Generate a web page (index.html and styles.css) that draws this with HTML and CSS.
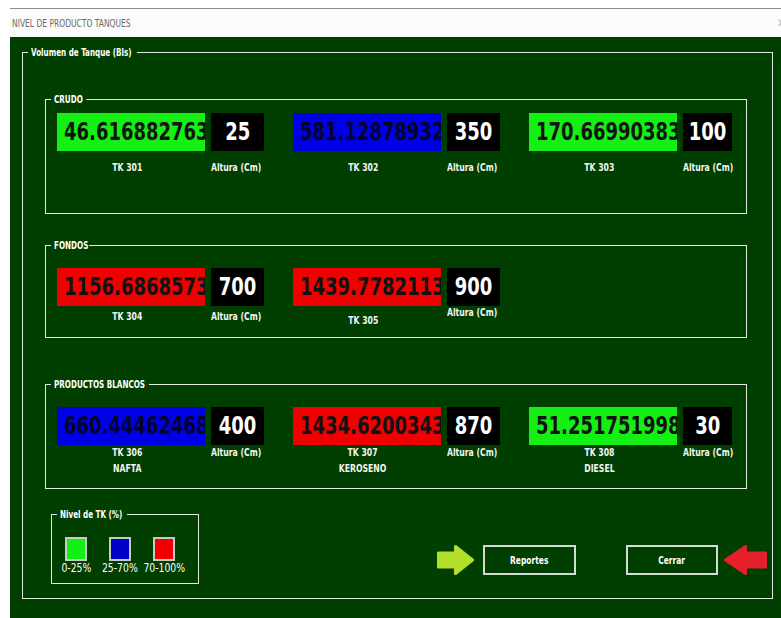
FILE: index.html
```html
<!DOCTYPE html>
<html lang="es">
<head>
<meta charset="utf-8">
<title>NIVEL DE PRODUCTO TANQUES</title>
<link rel="stylesheet" href="styles.css">
</head>
<body>
<div class="window">
  <div class="titlebar">
    <span class="title"><span class="sx">NIVEL DE PRODUCTO TANQUES</span></span>
    <span class="close">✕</span>
  </div>
  <div class="client">
    <fieldset class="frame frame--outer">
      <legend class="legend--outer"><span class="sx">Volumen de Tanque (Bls)</span></legend>
      <div class="outer-body">

        <fieldset class="frame group group--crudo">
          <legend class="legend--crudo"><span class="sx">CRUDO</span></legend>
          <div class="group-body">
            <div class="tanks">
              <div class="tank">
                <div class="vol vol--low"><span class="sx">46.616882763</span></div>
                <div class="level"><span class="sx">25</span></div>
                <div class="tag"><span class="sx">TK 301</span></div>
                <div class="unit"><span class="sx">Altura (Cm)</span></div>
              </div>
              <div class="tank">
                <div class="vol vol--mid"><span class="sx">581.12878932</span></div>
                <div class="level"><span class="sx">350</span></div>
                <div class="tag"><span class="sx">TK 302</span></div>
                <div class="unit"><span class="sx">Altura (Cm)</span></div>
              </div>
              <div class="tank">
                <div class="vol vol--low"><span class="sx">170.66990383</span></div>
                <div class="level level--narrow"><span class="sx">100</span></div>
                <div class="tag"><span class="sx">TK 303</span></div>
                <div class="unit"><span class="sx">Altura (Cm)</span></div>
              </div>
            </div>
          </div>
        </fieldset>

        <fieldset class="frame group group--fondos">
          <legend class="legend--fondos"><span class="sx">FONDOS</span></legend>
          <div class="group-body">
            <div class="tanks">
              <div class="tank">
                <div class="vol vol--high"><span class="sx">1156.6868573</span></div>
                <div class="level"><span class="sx">700</span></div>
                <div class="tag"><span class="sx">TK 304</span></div>
                <div class="unit"><span class="sx">Altura (Cm)</span></div>
              </div>
              <div class="tank">
                <div class="vol vol--high"><span class="sx">1439.7782113</span></div>
                <div class="level"><span class="sx">900</span></div>
                <div class="tag tag--low"><span class="sx">TK 305</span></div>
                <div class="unit"><span class="sx">Altura (Cm)</span></div>
              </div>
            </div>
          </div>
        </fieldset>

        <fieldset class="frame group group--blancos">
          <legend class="legend--blancos"><span class="sx">PRODUCTOS BLANCOS</span></legend>
          <div class="group-body">
            <div class="tanks">
              <div class="tank">
                <div class="vol vol--mid"><span class="sx">660.44462468</span></div>
                <div class="level"><span class="sx">400</span></div>
                <div class="tag"><span class="sx">TK 306<br>NAFTA</span></div>
                <div class="unit"><span class="sx">Altura (Cm)</span></div>
              </div>
              <div class="tank">
                <div class="vol vol--high"><span class="sx">1434.6200343</span></div>
                <div class="level"><span class="sx">870</span></div>
                <div class="tag"><span class="sx">TK 307<br>KEROSENO</span></div>
                <div class="unit"><span class="sx">Altura (Cm)</span></div>
              </div>
              <div class="tank">
                <div class="vol vol--low"><span class="sx">51.251751998</span></div>
                <div class="level level--narrow"><span class="sx">30</span></div>
                <div class="tag"><span class="sx">TK 308<br>DIESEL</span></div>
                <div class="unit"><span class="sx">Altura (Cm)</span></div>
              </div>
            </div>
          </div>
        </fieldset>

        <div class="footer">
          <fieldset class="frame key">
            <legend class="legend--key"><span class="sx">Nivel de TK (%)</span></legend>
            <div class="key-body">
              <div class="key-item">
                <span class="swatch swatch--low"></span>
                <span class="key-label"><span class="sx">0-25%</span></span>
              </div>
              <div class="key-item">
                <span class="swatch swatch--mid"></span>
                <span class="key-label"><span class="sx">25-70%</span></span>
              </div>
              <div class="key-item">
                <span class="swatch swatch--high"></span>
                <span class="key-label"><span class="sx">70-100%</span></span>
              </div>
            </div>
          </fieldset>

          <div class="actions">
            <svg class="arrow arrow--go" width="37" height="30" viewBox="0 0 37 30">
              <path d="M1.5 8 H18.5 V1.5 L35.5 15 L18.5 28.5 V22 H1.5 Z"/>
            </svg>
            <button class="btn btn--reports" type="button"><span class="sx">Reportes</span></button>
            <button class="btn btn--close" type="button"><span class="sx">Cerrar</span></button>
            <svg class="arrow arrow--back" width="43" height="30" viewBox="0 0 43 30">
              <path d="M41.5 8 H21.5 V1.5 L1.5 15 L21.5 28.5 V22 H41.5 Z"/>
            </svg>
          </div>
        </div>

      </div>
    </fieldset>
  </div>
</div>
</body>
</html>
```

FILE: styles.css
```css
* {
  box-sizing: border-box;
}

body {
  margin: 0;
  background: #ffffff;
  font-family: "DejaVu Sans Condensed", "DejaVu Sans", sans-serif;
}

/* the form uses a tall, narrow face: squeeze the condensed face horizontally */
.sx {
  display: inline-block;
  white-space: nowrap;
  transform: scaleX(0.78);
  transform-origin: center center;
}

/* window chrome */
.window {
  margin: 8px 0 0 10px;
  width: 771px;
  border-top: 1px solid #8c8c8c;
}

.titlebar {
  height: 28px;
  background: #fbfbfb;
  display: flex;
  align-items: center;
  padding-left: 2px;
}

.title {
  font-size: 10.5px;
  color: #6a6a6a;
}

.title .sx {
  transform: scaleX(0.8);
  transform-origin: left center;
}

.close {
  margin-left: auto;
  margin-right: -5px;
  color: #b0b0b0;
  font-size: 12px;
}

.client {
  background: #003f00;
  height: 581px;
  padding: 9px 0 0 12px;
  overflow: hidden;
}

/* group frames */
.frame {
  margin: 0;
  padding: 0;
  min-width: 0;
  border: 1px solid #e2e9e2;
}

.frame > legend {
  margin-left: 5px;
  padding: 0 3px;
  line-height: 13px;
  font-size: 10px;
  font-weight: bold;
  color: #ffffff;
  white-space: nowrap;
}

.frame > legend .sx {
  transform: scaleX(0.8);
  transform-origin: left center;
}

.legend--outer {
  width: 109px;
  font-size: 10.5px;
}

.legend--outer .sx,
.legend--key .sx {
  transform: scaleX(0.78);
}

.legend--crudo {
  width: 35px;
}

.legend--fondos {
  width: 38px;
}

.legend--blancos {
  width: 98px;
}

.legend--key {
  width: 70px;
  font-size: 10.5px;
}

.frame--outer {
  width: 751px;
  height: 553px;
}

.outer-body {
  padding: 34px 0 0 22px;
}

.group {
  width: 702px;
}

.group--fondos {
  margin-top: 25px;
}

.group--blancos {
  margin-top: 40px;
}

.group--crudo .group-body {
  height: 107px;
  padding-top: 7px;
}

.group--fondos .group-body {
  height: 85px;
  padding-top: 16px;
}

.group--blancos .group-body {
  height: 97px;
  padding-top: 16px;
}

/* tank cells */
.tanks {
  display: grid;
  grid-template-columns: repeat(3, 207px);
  column-gap: 29px;
  padding-left: 11px;
}

.tank {
  display: grid;
  grid-template-columns: 148px 53px;
  column-gap: 6px;
  align-items: start;
}

.vol,
.level {
  height: 38px;
  line-height: 38px;
  font-size: 25px;
  font-weight: bold;
  white-space: nowrap;
  overflow: hidden;
}

.vol {
  padding-left: 7px;
  color: #121212;
}

.vol .sx {
  transform: scaleX(0.8);
  transform-origin: left center;
}

.level .sx {
  transform: scaleX(0.8);
}

.vol--low {
  background: #14f014;
}

.vol--mid {
  background: #0000e6;
  color: #04042a;
}

.vol--high {
  background: #f00000;
}

.level {
  background: #000000;
  color: #ffffff;
  text-align: center;
}

.level--narrow {
  width: 49px;
}

.tag,
.unit {
  font-size: 11px;
  font-weight: bold;
  color: #f4f4f4;
  line-height: 16px;
  white-space: nowrap;
}

.tag {
  text-align: center;
  padding-right: 8px;
}

.unit .sx {
  transform-origin: left center;
}

.group--crudo .tag,
.group--crudo .unit {
  margin-top: 9px;
}

.group--fondos .tag,
.group--fondos .unit {
  line-height: 14px;
}

.group--fondos .tag--low {
  margin-top: 8px;
}

/* legend of colours + actions */
.footer {
  display: flex;
  align-items: flex-start;
  margin-top: 19px;
  padding-left: 6px;
}

.key {
  width: 148px;
}

.key-body {
  height: 62px;
  padding: 16px 0 0 2px;
  display: flex;
}

.key-item {
  width: 44px;
  display: flex;
  flex-direction: column;
  align-items: center;
}

.swatch {
  width: 22px;
  height: 24px;
  border: 2px solid #c4ccc4;
}

.swatch--low {
  background: #14f014;
}

.swatch--mid {
  background: #0000c8;
}

.swatch--high {
  background: #f00000;
}

.key-label {
  font-size: 12px;
  line-height: 14px;
  color: #ffffff;
  white-space: nowrap;
}

.key-label .sx {
  transform: scaleX(0.86);
}

.actions {
  display: flex;
  align-items: center;
  margin-top: 37px;
  margin-left: 238px;
}

.arrow path {
  stroke-width: 3;
  stroke-linejoin: round;
}

.arrow--go {
  margin-right: 9px;
}

.arrow--go path {
  fill: #b2e02a;
  stroke: #b2e02a;
}

.arrow--back {
  margin-left: 6px;
}

.arrow--back path {
  fill: #e6202a;
  stroke: #e6202a;
}

.btn {
  height: 30px;
  padding: 0;
  background: transparent;
  border: 2px solid #d3dad3;
  color: #ffffff;
  font-family: inherit;
  font-size: 11px;
  font-weight: bold;
}

.btn .sx {
  transform: scaleX(0.76);
}

.btn--reports {
  width: 93px;
}

.btn--close {
  width: 92px;
  margin-left: 50px;
}
```
